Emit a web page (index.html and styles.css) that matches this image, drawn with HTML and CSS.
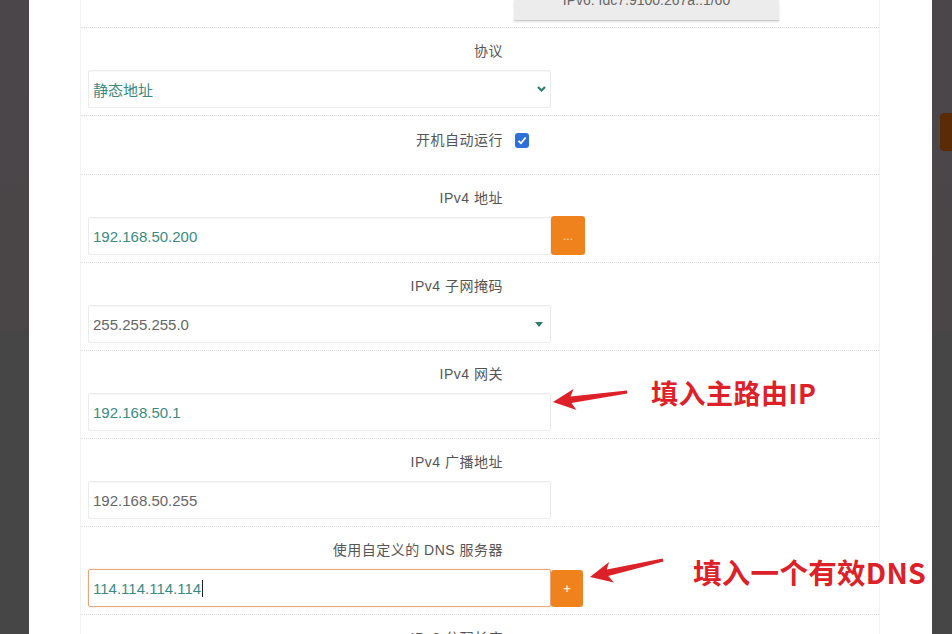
FILE: index.html
```html
<!DOCTYPE html>
<html lang="zh-CN">
<head>
<meta charset="utf-8">
<title>接口设置</title>
<link rel="stylesheet" href="styles.css">
</head>
<body>
<div class="modal">
  <div class="content">
    <div class="row top-row">
      <div class="ipv6-box"><span>IPv6: fdc7:9100:267a::1/60</span></div>
    </div>
    <div class="row">
      <div class="label">协议</div>
      <div class="field">
        <div class="box select teal">静态地址<svg class="chev" width="9" height="6" viewBox="0 0 9 6"><polyline points="1,1 4.5,4.5 8,1" fill="none" stroke="#2f7d70" stroke-width="2.2"/></svg></div>
      </div>
    </div>
    <div class="row check-row">
      <div class="label">开机自动运行</div>
      <span class="checkbox"><svg width="10" height="9" viewBox="0 0 10 9"><polyline points="1.5,4.8 4,7.2 8.6,1.5" fill="none" stroke="#fff" stroke-width="1.8"/></svg></span>
    </div>
    <div class="row">
      <div class="label">IPv4 地址</div>
      <div class="field">
        <div class="box teal">192.168.50.200</div>
        <div class="btn btn-more">...</div>
      </div>
    </div>
    <div class="row">
      <div class="label">IPv4 子网掩码</div>
      <div class="field">
        <div class="box select">255.255.255.0<span class="tri"></span></div>
      </div>
    </div>
    <div class="row">
      <div class="label">IPv4 网关</div>
      <div class="field">
        <div class="box teal">192.168.50.1</div>
      </div>
    </div>
    <div class="row">
      <div class="label">IPv4 广播地址</div>
      <div class="field">
        <div class="box">192.168.50.255</div>
      </div>
    </div>
    <div class="row">
      <div class="label">使用自定义的 DNS 服务器</div>
      <div class="field">
        <div class="box teal focus">114.114.114.114<span class="caret"></span></div>
        <div class="btn btn-add">+</div>
      </div>
    </div>
    <div class="row">
      <div class="label">IPv6 分配长度</div>
    </div>
  </div>
</div>
<div class="bg-btn"></div>
<svg class="arrows" width="952" height="634" viewBox="0 0 952 634">
  <polygon fill="#dd2128" points="553,402 573.5,389 570.6,396.4 626.9,390.6 627.4,393.6 571.4,403 576.5,410"/>
  <polygon fill="#dd2128" points="590,577 609.1,562 606.8,569.6 662.6,558.6 663.5,561.5 608.2,576 614,582.5"/>
</svg>
<div class="note note1">填入主路由IP</div>
<div class="note note2">填入一个有效DNS</div>
</body>
</html>
```

FILE: styles.css
```css
html, body {
  margin: 0;
  padding: 0;
}

body {
  width: 952px;
  height: 634px;
  overflow: hidden;
  position: relative;
  background: linear-gradient(#4b4649 0, #4a4648 330px, #464646 330px, #464646 100%);
  font-family: "Liberation Sans", "Noto Sans CJK SC", sans-serif;
}

.modal {
  margin-left: 29px;
  width: 903px;
  height: 634px;
  background: #fff;
  overflow: hidden;
}

.content {
  margin-left: 51px;
  width: 798px;
  height: 100%;
  border-left: 1px solid #f1f1f1;
  border-right: 1px solid #f1f1f1;
}

.row {
  padding: 14px 0 7px;
  border-bottom: 1px dotted #d9d9d9;
}

.top-row {
  height: 27px;
  padding: 0;
}

.ipv6-box {
  margin-left: 433px;
  width: 265px;
  height: 20px;
  background: #ececec;
  border-bottom: 1px solid #cdcdcd;
  box-shadow: 0 1px 2px rgba(0, 0, 0, 0.12);
  overflow: hidden;
  text-align: center;
  font-size: 14px;
  color: #666;
}

.ipv6-box span {
  display: block;
  line-height: 14px;
  margin-top: -7px;
}

.label {
  width: 422px;
  text-align: right;
  font-size: 14px;
  line-height: 18px;
  color: #555;
  letter-spacing: 0.5px;
}

.field {
  display: flex;
  margin-top: 10px;
  padding-left: 7px;
}

.box {
  width: 463px;
  height: 38px;
  box-sizing: border-box;
  border: 1px solid #ebebeb;
  border-radius: 2px;
  display: flex;
  align-items: center;
  padding-left: 4px;
  font-size: 15px;
  color: #666;
  box-shadow: inset 0 1px 1px rgba(0, 0, 0, 0.03);
}

.teal {
  color: #3b8a82;
}

.select {
  justify-content: space-between;
  padding-right: 4px;
}

.chev {
  display: block;
}

.tri {
  width: 0;
  height: 0;
  border-left: 4px solid transparent;
  border-right: 4px solid transparent;
  border-top: 5px solid #2f7d70;
  margin-right: 3px;
}

.check-row {
  display: flex;
  align-items: center;
  padding: 15px 0 25px;
}

.checkbox {
  width: 14px;
  height: 15px;
  margin-left: 12px;
  background: #2e6fd8;
  border-radius: 3px;
  display: flex;
  align-items: center;
  justify-content: center;
}

.checkbox svg {
  display: block;
}

.btn {
  background: #f0821e;
  border-radius: 3px;
  color: #fbd9b8;
  display: flex;
  align-items: center;
  justify-content: center;
  font-size: 12px;
}

.btn-more {
  width: 34px;
  height: 39px;
  margin-top: -1px;
}

.btn-add {
  width: 32px;
  height: 37px;
  margin-top: 1px;
  font-size: 13px;
  font-weight: bold;
  color: #fde4cc;
}

.focus {
  border-color: #e6a57a;
  box-shadow: 0 0 2px rgba(240, 130, 30, 0.3);
}

.caret {
  display: inline-block;
  width: 1px;
  height: 17px;
  background: #222;
  margin-left: 1px;
}

.bg-btn {
  position: absolute;
  left: 940px;
  top: 113px;
  width: 14px;
  height: 38px;
  background: #5b2b08;
  border-radius: 4px;
}

.arrows {
  position: absolute;
  left: 0;
  top: 0;
}

.note {
  position: absolute;
  font-family: "Noto Sans CJK SC", sans-serif;
  font-weight: 700;
  color: #dd2128;
  white-space: nowrap;
}

.note1 {
  left: 651px;
  top: 377px;
  font-size: 27px;
  line-height: 32px;
  letter-spacing: 0.5px;
}

.note2 {
  left: 693px;
  top: 555px;
  font-size: 28.5px;
  line-height: 34px;
  letter-spacing: 0.3px;
}
```
